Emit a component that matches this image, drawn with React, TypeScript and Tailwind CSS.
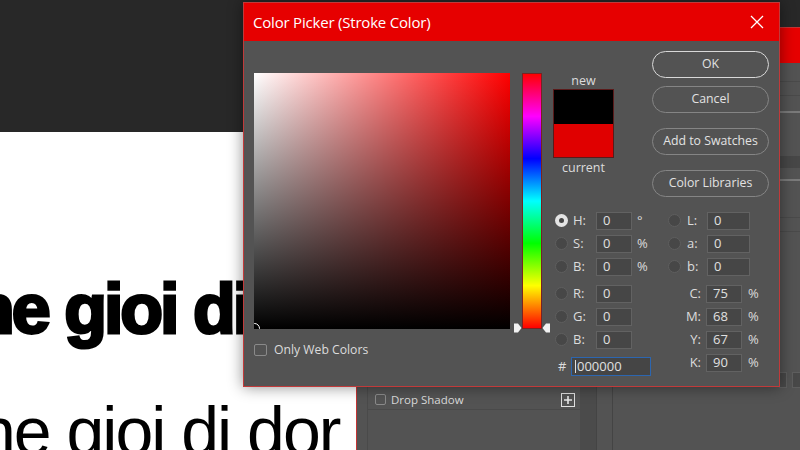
import React from "react";

function Radio({ on = false }: { on?: boolean }) {
  return on ? (
    <div className="w-[13px] h-[13px] rounded-full bg-[#e4e4e4] flex items-center justify-center shrink-0">
      <div className="w-[5px] h-[5px] rounded-full bg-[#444]" />
    </div>
  ) : (
    <div className="w-[13px] h-[13px] rounded-full bg-[#474747] border border-[#5e5e5e] shrink-0" />
  );
}

function Field({ w, value }: { w: string; value: string }) {
  return (
    <div className={`${w} h-[18px] bg-[#464646] border border-[#626262] flex items-center pl-[6px] text-[13px] text-[#e0e0e0] leading-none`}>
      {value}
    </div>
  );
}

function LeftRow({ label, value, unit, on }: { label: string; value: string; unit?: string; on?: boolean }) {
  return (
    <div className="h-[23px] flex items-center">
      <Radio on={on} />
      <div className="ml-[5px] w-[23px] text-[13px] text-[#dcdcdc]">{label}</div>
      <Field w="w-[36px]" value={value} />
      <div className="ml-[5px] text-[13px] text-[#dcdcdc]">{unit}</div>
    </div>
  );
}

function LabRow({ label, value }: { label: string; value: string }) {
  return (
    <div className="h-[23px] flex items-center">
      <Radio />
      <div className="ml-[6px] w-[20px] text-[13px] text-[#dcdcdc]">{label}</div>
      <Field w="w-[43px]" value={value} />
    </div>
  );
}

function CmykRow({ label, value }: { label: string; value: string }) {
  return (
    <div className="h-[23px] flex items-center">
      <div className="w-[38px] pr-[5px] text-right text-[13px] text-[#dcdcdc]">{label}</div>
      <Field w="w-[36px]" value={value} />
      <div className="ml-[6px] text-[13px] text-[#dcdcdc]">%</div>
    </div>
  );
}

function Btn({ children, primary = false, className = "" }: { children: React.ReactNode; primary?: boolean; className?: string }) {
  return (
    <div
      className={`h-[27px] rounded-full flex items-center justify-center text-[12.3px] text-[#e2e2e2] ${
        primary ? "border-[1.5px] border-[#d8d8d8]" : "border border-[#858585]"
      } ${className}`}
    >
      {children}
    </div>
  );
}

function LayerStyleWindow() {
  return (
    <div className="absolute left-[356px] top-[27px] w-[460px] h-[430px] border border-[#c43434] bg-[#535353] flex flex-col">
      <div className="h-[35px] bg-[#e60000] shrink-0" />
      <div className="flex flex-1">
        <div className="ml-[10px] w-[213px] border-l border-[#4a4a4a] flex flex-col">
          <div className="h-[327px]" />
          <div className="h-[20px] flex items-center pl-[7px] border-b border-[#4a4a4a]">
            <div className="w-[11px] h-[11px] rounded-[2px] border border-[#8a8a8a]" />
            <div className="ml-[5px] text-[11.5px] text-[#dadada]">Drop Shadow</div>
            <div className="ml-auto mr-[5px] w-[14px] h-[14px] border border-[#e0e0e0] flex items-center justify-center">
              <svg width="10" height="10" viewBox="0 0 10 10">
                <path d="M5 1v8M1 5h8" stroke="#e8e8e8" strokeWidth="1.6" />
              </svg>
            </div>
          </div>
        </div>
        <div className="w-[16px] bg-[#4b4b4b]" />
        <div className="w-[16px] border-l border-[#444]" />
        <div className="flex-1 border-l border-[#444] flex flex-col">
          <div className="mt-[18px] h-px bg-[#4a4a4a]" />
          <div className="mt-[13px] h-px bg-[#4a4a4a]" />
          <div className="mt-[15px] h-[2px] bg-[#7a7a7a]" />
          <div className="mt-[43px] h-[12px] bg-[#474747]" />
          <div className="mt-[11px] h-[2px] bg-[#7a7a7a]" />
          <div className="mt-[36px] h-px bg-[#4a4a4a]" />
          <div className="mt-[13px] h-px bg-[#4a4a4a]" />
          <div className="mt-[140px] flex">
            <div className="ml-[166px] w-[8px] h-[16px] bg-[#484848] border border-[#5e5e5e]" />
            <div className="ml-[5px] w-[12px] h-[16px] bg-[#484848] border border-[#5e5e5e]" />
          </div>
        </div>
      </div>
    </div>
  );
}

function ColorPicker() {
  return (
    <div className="absolute left-[243px] top-[2px] w-[537px] h-[385px] border border-[#c13a3a] bg-[#535353] shadow-[0_0_14px_rgba(0,0,0,0.45)] flex flex-col">
      <div className="h-[38px] bg-[#e60000] flex items-center pl-[9px] shrink-0">
        <div className="text-[15px] text-white tracking-[-0.2px]">Color Picker (Stroke Color)</div>
        <svg className="ml-auto mr-[15px]" width="14" height="14" viewBox="0 0 14 14">
          <path d="M1 1L13 13M13 1L1 13" stroke="#fff" strokeWidth="1.3" />
        </svg>
      </div>
      <div className="flex pl-[10px]">
        {/* Column A */}
        <div className="flex flex-col pt-[32px]">
          <div className="relative w-[256px] h-[256px] overflow-hidden bg-[linear-gradient(to_right,#ffffff,#ff0000)]">
            <div className="absolute inset-0 bg-[linear-gradient(to_top,#000000,rgba(0,0,0,0))]" />
            <div className="absolute left-[-5px] bottom-[-5px] w-[11px] h-[11px] rounded-full border border-white" />
          </div>
          <div className="mt-[14px] flex items-center">
            <div className="w-[13px] h-[12px] rounded-[2px] border border-[#8a8a8a]" />
            <div className="ml-[7px] text-[12.2px] leading-[14px] text-[#dcdcdc]">Only Web Colors</div>
          </div>
        </div>
        {/* Column B hue */}
        <div className="ml-[12px] pt-[32px]">
          <div className="relative w-[20px] h-[256px] border border-[#7a2222] bg-[linear-gradient(to_bottom,#ff0000,#ff00ff,#0000ff,#00ffff,#00ff00,#ffff00,#ff0000)]">
            <svg className="absolute left-[-10px] bottom-[-6px]" width="9" height="12" viewBox="0 0 9 12">
              <path d="M1 1.5h4l3.5 4.5L5 10.5H1z" fill="#f2f2f2" />
            </svg>
            <svg className="absolute right-[-10px] bottom-[-6px]" width="9" height="12" viewBox="0 0 9 12">
              <path d="M8 1.5H4L0.5 6 4 10.5h4z" fill="#f2f2f2" />
            </svg>
          </div>
        </div>
        {/* Column C */}
        <div className="ml-[11px] w-[216px] pt-[10px] flex flex-col">
          <div className="flex">
            <div className="mt-[22px] w-[61px] flex flex-col items-center">
              <div className="h-[16px] leading-[16px] text-[12.5px] text-[#dcdcdc]">new</div>
              <div className="w-[61px] h-[69px] border border-[#5a1a1a] flex flex-col">
                <div className="flex-1 bg-black" />
                <div className="flex-1 bg-[#e00000]" />
              </div>
              <div className="mt-[2px] h-[16px] leading-[16px] text-[12.5px] text-[#dcdcdc]">current</div>
            </div>
            <div className="ml-auto w-[117px] flex flex-col">
              <Btn primary>OK</Btn>
              <Btn className="mt-[8px]">Cancel</Btn>
              <Btn className="mt-[15px]">Add to Swatches</Btn>
              <Btn className="mt-[15px]">Color Libraries</Btn>
            </div>
          </div>
          <div className="mt-[12px] flex pl-[2px]">
            <div className="w-[113px] flex flex-col">
              <LeftRow label="H:" value="0" unit="°" on />
              <LeftRow label="S:" value="0" unit="%" />
              <LeftRow label="B:" value="0" unit="%" />
              <div className="h-[4px]" />
              <LeftRow label="R:" value="0" />
              <LeftRow label="G:" value="0" />
              <LeftRow label="B:" value="0" />
              <div className="mt-[4px] h-[23px] flex items-center">
                <div className="pl-[3px] w-[16px] text-[13px] text-[#dcdcdc]">#</div>
                <div className="w-[80px] h-[19px] bg-[#454545] border border-[#2c66b0] flex items-center pl-[3px] text-[13px] text-[#e0e0e0] leading-none">
                  <span className="w-px h-[13px] bg-[#e0e0e0] mr-px" />
                  000000
                </div>
              </div>
            </div>
            <div className="flex flex-col">
              <LabRow label="L:" value="0" />
              <LabRow label="a:" value="0" />
              <LabRow label="b:" value="0" />
              <div className="h-[4px]" />
              <CmykRow label="C:" value="75" />
              <CmykRow label="M:" value="68" />
              <CmykRow label="Y:" value="67" />
              <CmykRow label="K:" value="90" />
            </div>
          </div>
        </div>
      </div>
    </div>
  );
}

export default function App() {
  return (
    <div className="relative w-[800px] h-[450px] overflow-hidden bg-white font-['Open_Sans','Noto_Sans',sans-serif]">
      <div className="h-[132px] bg-[#282828]" />
      <div className="flex flex-col">
        <div className="mt-[142px] ml-[-28px] whitespace-nowrap font-['Liberation_Sans',Arial,sans-serif] font-bold text-[70px] leading-none tracking-[-3px] text-black [-webkit-text-stroke:3px_#000]">
          ne gioi di
        </div>
        <div className="mt-[53px] ml-[-22px] whitespace-nowrap font-['Liberation_Sans',Arial,sans-serif] font-normal text-[68px] leading-none tracking-[-2px] text-black">
          ne gioi di dor
        </div>
      </div>
      <LayerStyleWindow />
      <ColorPicker />
    </div>
  );
}
